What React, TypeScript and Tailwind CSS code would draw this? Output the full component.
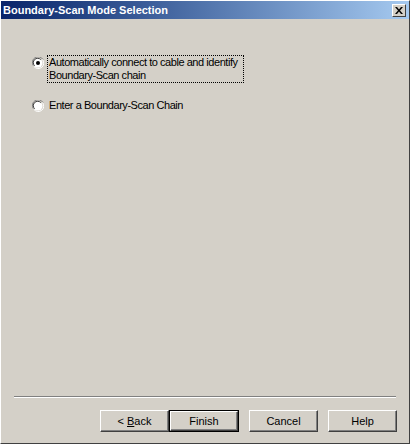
export default function App() {
  const font = { fontFamily: '"Liberation Sans", Arial, sans-serif' };

  return (
    <div
      className="w-[410px] h-[444px] bg-[#d4d0c8] flex flex-col border-t border-l border-t-white border-l-white border-r border-b border-r-[#404040] border-b-[#404040] text-black text-[11px]"
      style={font}
    >
      {/* title bar */}
      <div className="h-[18px] flex items-center justify-between pl-[2px] pr-[3px] bg-gradient-to-r from-[#0a246a] to-[#a6caf0]">
        <span className="text-white font-bold text-[11px] leading-none">
          Boundary-Scan Mode Selection
        </span>
        <button className="w-[14px] h-[13px] bg-[#d4d0c8] flex items-center justify-center border border-t-white border-l-white border-r-[#404040] border-b-[#404040]">
          <svg width="8" height="7" viewBox="0 0 8 7">
            <path d="M0 0h2l2 2.5L6 0h2L5 3.5 8 7H6L4 4.5 2 7H0l3-3.5z" fill="#000" />
          </svg>
        </button>
      </div>

      {/* content */}
      <div className="flex-1 flex flex-col px-[12px]">
        <div className="flex-1 flex flex-col gap-[16px] pt-[38px] pl-[19px] tracking-[-0.45px]">
          <div className="flex items-start gap-[3px]">
            <Radio checked />
            <div className="border border-dotted border-black px-[1px] leading-[13px] mt-[-2px] w-[197px] whitespace-nowrap">
              Automatically connect to cable and identify
              <br />
              Boundary-Scan chain
            </div>
          </div>
          <div className="flex items-center gap-[4px]">
            <Radio />
            <span className="leading-[13px] pl-[1px] whitespace-nowrap">Enter a Boundary-Scan Chain</span>
          </div>
        </div>

        {/* separator */}
        <div className="h-[2px] border-t border-t-[#808080] border-b border-b-white mx-[1px]" />

        {/* buttons */}
        <div className="flex justify-end pt-[12px] pb-[11px]">
          <Btn label="back" />
          <Btn label="Finish" def />
          <div className="w-[10px]" />
          <Btn label="Cancel" />
          <div className="w-[10px]" />
          <Btn label="Help" />
        </div>
      </div>
    </div>
  );
}

function Radio({ checked }: { checked?: boolean }) {
  return (
    <svg width="12" height="12" viewBox="0 0 12 12" className="shrink-0">
      <path d="M11 2.5A5.5 5.5 0 0 0 1.2 8.5" stroke="#808080" fill="none" />
      <circle cx="6" cy="6" r="4.5" fill="#fff" />
      <path d="M2 9.5A5 5 0 0 0 10.5 2.5" stroke="#fff" fill="none" strokeWidth="1" />
      <path d="M2.6 8.8A4.2 4.2 0 0 1 8.8 2.6" stroke="#404040" fill="none" />
      {checked && <circle cx="6" cy="6" r="2" fill="#000" />}
    </svg>
  );
}

function Btn({ label, def }: { label: string; def?: boolean }) {
  return (
    <div
      className={
        def
          ? "w-[70px] h-[22px] border border-black flex"
          : "w-[69px] h-[22px] flex"
      }
    >
      <div className="flex-1 flex items-center justify-center border border-t-white border-l-white border-r-[#404040] border-b-[#404040] shadow-[inset_-1px_-1px_0_#808080]">
        {label === "back" ? (
          <span>
            &lt; <u>B</u>ack
          </span>
        ) : (
          <span>{label}</span>
        )}
      </div>
    </div>
  );
}
